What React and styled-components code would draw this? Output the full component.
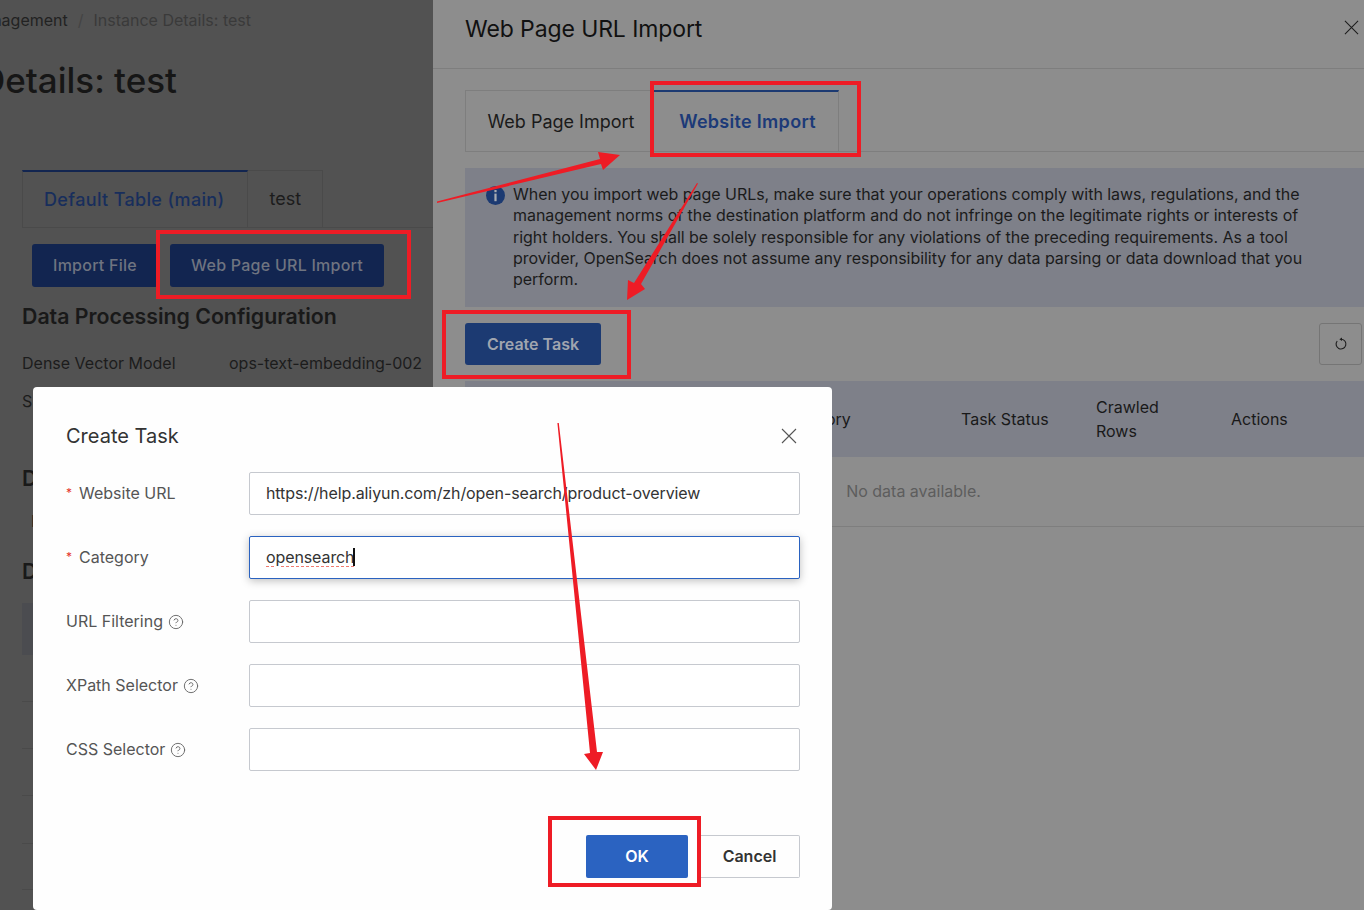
import React from "react";
import styled, { createGlobalStyle } from "styled-components";
import { CircleHelp } from "lucide-react";

const GlobalStyle = createGlobalStyle`
  html, body {
    margin: 0;
    padding: 0;
    background: #8c8c8c;
    font-family: Inter, "Liberation Sans", sans-serif;
  }
  * {
    box-sizing: border-box;
  }
`;

const Screen = styled.div`
  position: relative;
  display: grid;
  grid-template-columns: 433px 1fr;
  width: 1364px;
  height: 910px;
  overflow: hidden;
`;

// page behind the drawer, scrolled a bit to the right
const PagePanel = styled.div`
  background: #525252;
  overflow: hidden;
  padding-left: 22px;
  color: #191919;
`;
const Crumbs = styled.div`
  display: flex;
  justify-content: flex-end;
  gap: 10px;
  width: 251px;
  margin: 10px 0 0 -22px;
  height: 20px;
  line-height: 20px;
  font-size: 16px;
  white-space: nowrap;
  color: #222;
`;
const CrumbSep = styled.span`
  color: #444;
`;
const CrumbCurrent = styled.span`
  color: #3a3a3a;
`;
const PageTitle = styled.h1`
  display: flex;
  justify-content: flex-end;
  width: 177px;
  margin: 28px 0 0 -22px;
  height: 44px;
  line-height: 44px;
  font-size: 35px;
  font-weight: 500;
  white-space: nowrap;
  color: #161616;
`;
const PageTabs = styled.div`
  display: flex;
  margin: 68px 0 0;
  height: 58px;
  border-bottom: 1px solid #4a4a4a;
`;
const PageTab = styled.div`
  padding: 0 ${p => (p.$active ? 22 : 21)}px 0 ${p => (p.$active ? 21 : 22)}px;
  line-height: 56px;
  font-size: 18px;
  letter-spacing: ${p => (p.$active ? 0.35 : 0)}px;
  font-weight: ${p => (p.$active ? 500 : 400)};
  color: ${p => (p.$active ? "#182e5c" : "#1c1c1c")};
  border: 1px solid #4a4a4a;
  border-top: ${p => (p.$active ? "2px solid #122550" : "1px solid #4a4a4a")};
  border-bottom: none;
  border-left: ${p => (p.$active ? "1px solid #4a4a4a" : "none")};
`;
const PageActions = styled.div`
  display: flex;
  gap: 12px;
  margin: 16px 0 0 10px;
`;
const DarkButton = styled.div`
  width: ${p => p.$w}px;
  height: 43px;
  text-align: center;
  line-height: 43px;
  font-size: 16px;
  letter-spacing: 0.25px;
  font-weight: 500;
  white-space: nowrap;
  color: #6f7480;
  background: #122550;
  border-radius: 3px;
`;
const SectionTitle = styled.h2`
  margin: ${p => p.$top}px 0 0;
  height: 28px;
  line-height: 28px;
  font-size: 21.3px;
  font-weight: 600;
  white-space: nowrap;
  color: #191919;
`;
const ConfigRow = styled.div`
  display: flex;
  margin-top: ${p => p.$top}px;
  padding-left: ${p => p.$indent || 0}px;
  height: 20px;
  line-height: 20px;
  font-size: 16px;
  white-space: nowrap;
  color: #1c1c1c;
`;
const ConfigLabel = styled.span`
  width: 207px;
  flex: none;
`;
const PageTableHead = styled.div`
  margin-top: 18px;
  height: 52px;
  background: #4b4c50;
`;
const PageTableRow = styled.div`
  height: ${p => p.$h}px;
  border-bottom: 1px solid #4a4a4a;
`;

// drawer
const Drawer = styled.div`
  background: #8d8d8d;
  color: #191919;
  overflow: hidden;
`;
const DrawerHeader = styled.div`
  display: flex;
  align-items: center;
  justify-content: space-between;
  height: 69px;
  padding: 0 5px 11px 32px;
  border-bottom: 1px solid #7e7e7e;
  font-size: 23px;
  letter-spacing: -0.1px;
  font-weight: 400;
  color: #111;
`;
const DrawerClose = styled.div`
  margin-top: -3px;
`;
const DrawerBody = styled.div`
  padding: 21px 0 0 32px;
`;
const DrawerTabs = styled.div`
  display: flex;
  height: 62px;
  border-bottom: 1px solid #7e7e7e;
`;
const DrawerTab = styled.div`
  width: ${p => p.$w}px;
  padding-left: 5px;
  text-align: center;
  line-height: ${p => (p.$active ? 59 : 61)}px;
  font-size: 18px;
  letter-spacing: ${p => (p.$active ? 0.3 : 0)}px;
  font-weight: ${p => (p.$active ? 600 : 400)};
  color: ${p => (p.$active ? "#1c3a78" : "#1a1a1a")};
  border: 1px solid #7e7e7e;
  border-top: ${p => (p.$active ? "2px solid #1c3a72" : "1px solid #7e7e7e")};
  border-left: ${p => (p.$active ? "none" : "1px solid #7e7e7e")};
  border-bottom: none;
`;
const Notice = styled.div`
  display: flex;
  gap: 8px;
  height: 139px;
  margin-top: 16px;
  padding: 16px 50px 0 21px;
  background: #7e8089;
  font-size: 16px;
  letter-spacing: -0.04px;
  line-height: 21.3px;
  color: #1b1b1b;
`;
const NoticeIcon = styled.svg`
  flex: none;
  width: 19px;
  height: 19px;
  margin-top: 2px;
`;
const Toolbar = styled.div`
  display: flex;
  justify-content: space-between;
  margin-top: 16px;
  padding-right: 2px;
`;
const BlueButton = styled.div`
  width: 136px;
  height: 42px;
  text-align: center;
  line-height: 42px;
  font-size: 16px;
  font-weight: 600;
  color: #a0a5af;
  background: #1c3a72;
  border-radius: 3px;
`;
const RefreshButton = styled.div`
  display: flex;
  align-items: center;
  justify-content: center;
  width: 43px;
  height: 42px;
  border: 1px solid #757575;
  border-radius: 3px;
`;
const TableHead = styled.div`
  display: grid;
  grid-template-columns: 316px 180px 135px 135px 1fr;
  align-items: center;
  height: 76px;
  margin-top: 16px;
  background: #7e8089;
  font-size: 16px;
  line-height: 24px;
  color: #191919;
`;
const EmptyRow = styled.div`
  height: 70px;
  line-height: 68px;
  padding-right: 2px;
  text-align: center;
  font-size: 16px;
  color: #5d5d5d;
  border-bottom: 1px solid #7e7e7e;
`;

// create task dialog
const Dialog = styled.div`
  position: absolute;
  left: 33px;
  top: 387px;
  width: 799px;
  height: 523px;
  padding: 37px 32px 0 33px;
  background: #fefefe;
  border-radius: 4px;
`;
const DialogHeader = styled.div`
  display: flex;
  align-items: center;
  justify-content: space-between;
  height: 23px;
  margin-bottom: 25px;
  font-size: 20px;
  color: #333;
`;
const CloseIcon = styled.svg`
  display: block;
  width: ${p => p.$size}px;
  height: ${p => p.$size}px;
`;
const DialogClose = styled.div`
  margin-right: 3px;
`;
const FormRow = styled.div`
  display: flex;
  align-items: center;
  height: 43px;
  margin-bottom: 21px;
`;
const FormLabel = styled.div`
  display: flex;
  align-items: center;
  gap: 5px;
  width: 183px;
  flex: none;
  padding-bottom: 1px;
  line-height: 20px;
  font-size: 16px;
  color: #555;
`;
const Required = styled.span`
  margin-right: 2px;
  line-height: 14px;
  color: #e5352b;
  font-size: 12px;
`;
const HelpIcon = styled(CircleHelp)`
  width: 16px;
  height: 16px;
  margin-top: 2px;
  stroke-width: 1.4;
  color: #666;
`;
const Field = styled.div`
  display: flex;
  align-items: center;
  flex: 1;
  height: 43px;
  padding: 0 16px 1px;
  font-size: 16px;
  letter-spacing: -0.1px;
  color: #333;
  background: #fff;
  border: 1px solid ${p => (p.$focused ? "#2a62c0" : "#c6c9cf")};
  border-radius: 2px;
  box-shadow: ${p => (p.$focused ? "0 2px 8px rgba(0, 0, 0, 0.25)" : "none")};
`;
const Misspelled = styled.span`
  text-decoration: underline dashed #f0796f 1px;
  text-underline-offset: 3px;
`;
const Caret = styled.span`
  width: 2px;
  height: 18px;
  margin-left: -1px;
  background: #111;
`;
const DialogFooter = styled.div`
  display: flex;
  justify-content: flex-end;
  gap: 12px;
  margin-top: 64px;
`;
const OkButton = styled.div`
  width: 102px;
  height: 43px;
  text-align: center;
  line-height: 43px;
  font-size: 16px;
  font-weight: 600;
  color: #fff;
  background: #2b63c1;
  border-radius: 2px;
`;
const CancelButton = styled.div`
  width: 100px;
  height: 43px;
  text-align: center;
  line-height: 41px;
  font-size: 16px;
  font-weight: 600;
  color: #333;
  border: 1px solid #c6c9cf;
  border-left: none;
  border-radius: 0 2px 2px 0;
`;

// annotations drawn over the screenshot
const RedBox = styled.div`
  position: absolute;
  left: ${p => p.$x}px;
  top: ${p => p.$y}px;
  width: ${p => p.$w}px;
  height: ${p => p.$h}px;
  border: 4px solid #ee1c25;
`;
const Arrows = styled.svg`
  position: absolute;
  left: 0;
  top: 0;
  pointer-events: none;
`;

const Close = ({ size, color }) => (
  <CloseIcon $size={size} viewBox="0 0 16 16">
    <path d="M1 1L15 15M15 1L1 15" stroke={color} strokeWidth="1.1" fill="none" />
  </CloseIcon>
);

export default function App() {
  return (
    <Screen>
      <GlobalStyle />
      <PagePanel>
        <Crumbs>
          <span>Instance Management</span>
          <CrumbSep>/</CrumbSep>
          <CrumbCurrent>Instance Details: test</CrumbCurrent>
        </Crumbs>
        <PageTitle>Instance Details: test</PageTitle>
        <PageTabs>
          <PageTab $active>Default Table (main)</PageTab>
          <PageTab>test</PageTab>
        </PageTabs>
        <PageActions>
          <DarkButton $w={126}>Import File</DarkButton>
          <DarkButton $w={214}>Web Page URL Import</DarkButton>
        </PageActions>
        <SectionTitle $top={15}>Data Processing Configuration</SectionTitle>
        <ConfigRow $top={23}>
          <ConfigLabel>Dense Vector Model</ConfigLabel>
          <span>ops-text-embedding-002</span>
        </ConfigRow>
        <ConfigRow $top={18}>
          <ConfigLabel>S</ConfigLabel>
        </ConfigRow>
        <SectionTitle $top={53}>D</SectionTitle>
        <ConfigRow $top={19} $indent={9}>
          <ConfigLabel>I</ConfigLabel>
        </ConfigRow>
        <SectionTitle $top={26}>D</SectionTitle>
        <PageTableHead />
        <PageTableRow $h={47} />
        <PageTableRow $h={47} />
        <PageTableRow $h={47} />
        <PageTableRow $h={48} />
        <PageTableRow $h={46} />
      </PagePanel>

      <Drawer>
        <DrawerHeader>
          <span>Web Page URL Import</span>
          <DrawerClose><Close size={15} color="#1c1c1c" /></DrawerClose>
        </DrawerHeader>
        <DrawerBody>
          <DrawerTabs>
            <DrawerTab $w={187}>Web Page Import</DrawerTab>
            <DrawerTab $w={187} $active>Website Import</DrawerTab>
          </DrawerTabs>
          <Notice>
            <NoticeIcon viewBox="0 0 19 19">
              <circle cx="9.5" cy="9.5" r="9.5" fill="#1c3a72" />
              <rect x="8.4" y="4" width="2.2" height="2.2" fill="#a9acb3" />
              <rect x="8.4" y="7.6" width="2.2" height="7.6" fill="#a9acb3" />
            </NoticeIcon>
            <span>
              When you import web page URLs, make sure that your operations comply with laws,
              regulations, and the management norms of the destination platform and do not
              infringe on the legitimate rights or interests of right holders. You shall be solely
              responsible for any violations of the preceding requirements. As a tool provider,
              OpenSearch does not assume any responsibility for any data parsing or data download
              that you perform.
            </span>
          </Notice>
          <Toolbar>
            <BlueButton>Create Task</BlueButton>
            <RefreshButton>
              <svg width="14" height="14" viewBox="0 0 14 14" fill="none">
                <path d="M7.4 2.2A4.9 4.9 0 1 1 3.2 4" stroke="#1c1c1c" strokeWidth="1.1" />
                <path d="M8 0.5L5.4 2.2L8 3.9Z" fill="#1c1c1c" />
              </svg>
            </RefreshButton>
          </Toolbar>
          <TableHead>
            <span />
            <span>Category</span>
            <span>Task Status</span>
            <span>Crawled<br />Rows</span>
            <span>Actions</span>
          </TableHead>
          <EmptyRow>No data available.</EmptyRow>
        </DrawerBody>
      </Drawer>

      <Dialog>
        <DialogHeader>
          <span>Create Task</span>
          <DialogClose><Close size={16} color="#555" /></DialogClose>
        </DialogHeader>
        <FormRow>
          <FormLabel><Required>*</Required><span>Website URL</span></FormLabel>
          <Field>https://help.aliyun.com/zh/open-search/product-overview</Field>
        </FormRow>
        <FormRow>
          <FormLabel><Required>*</Required><span>Category</span></FormLabel>
          <Field $focused><Misspelled>opensearch</Misspelled><Caret /></Field>
        </FormRow>
        <FormRow>
          <FormLabel><span>URL Filtering</span><HelpIcon /></FormLabel>
          <Field />
        </FormRow>
        <FormRow>
          <FormLabel><span>XPath Selector</span><HelpIcon /></FormLabel>
          <Field />
        </FormRow>
        <FormRow>
          <FormLabel><span>CSS Selector</span><HelpIcon /></FormLabel>
          <Field />
        </FormRow>
        <DialogFooter>
          <OkButton>OK</OkButton>
          <CancelButton>Cancel</CancelButton>
        </DialogFooter>
      </Dialog>

      <RedBox $x={650} $y={81} $w={211} $h={76} />
      <RedBox $x={156} $y={230} $w={255} $h={69} />
      <RedBox $x={442} $y={310} $w={189} $h={69} />
      <RedBox $x={548} $y={816} $w={153} $h={71} />

      <Arrows width="1364" height="910" viewBox="0 0 1364 910">
        <polygon points="437,201.4 600,159 598,152 620,155 603,170 601,164 437,203" fill="#ee1c25" />
        <polygon points="697,183 698,183.6 641,284 645,289 627,300 628,280 634,283" fill="#ee1c25" />
        <polygon points="557.4,423 558.8,423 597,752 603,752 596,770 584,754 590,753" fill="#ee1c25" />
      </Arrows>
    </Screen>
  );
}
